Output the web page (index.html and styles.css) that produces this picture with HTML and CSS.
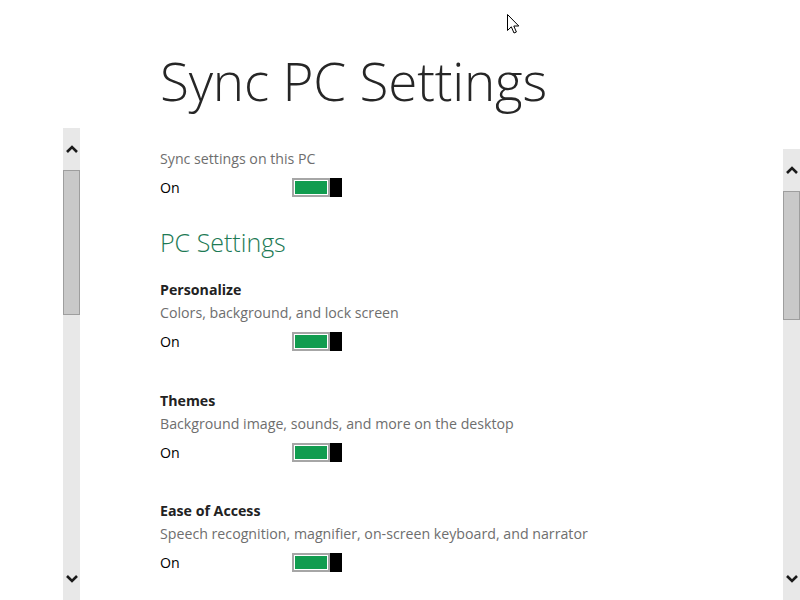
FILE: index.html
```html
<!DOCTYPE html>
<html lang="en">
<head>
<meta charset="utf-8">
<title>Sync PC Settings</title>
<link rel="stylesheet" href="styles.css">
</head>
<body>
<div class="screen">
  <div class="rail rail-left">
    <div class="scrollbar">
      <div class="sb-btn"><svg width="12" height="8" viewBox="0 0 12 8"><polyline points="1,7 6,2 11,7" fill="none" stroke="#1a1a1a" stroke-width="2.6"/></svg></div>
      <div class="sb-thumb thumb-left"></div>
      <div class="sb-track"></div>
      <div class="sb-btn"><svg width="12" height="8" viewBox="0 0 12 8"><polyline points="1,1 6,6 11,1" fill="none" stroke="#1a1a1a" stroke-width="2.6"/></svg></div>
    </div>
  </div>

  <main class="main">
    <h1 class="title">Sync PC Settings</h1>

    <div class="setting first">
      <div class="desc">Sync settings on this PC</div>
      <div class="toggle-row"><span class="state">On</span><span class="toggle"><span class="track"></span><span class="thumb"></span></span></div>
    </div>

    <h2 class="section">PC Settings</h2>

    <div class="setting">
      <div class="name">Personalize</div>
      <div class="desc">Colors, background, and lock screen</div>
      <div class="toggle-row"><span class="state">On</span><span class="toggle"><span class="track"></span><span class="thumb"></span></span></div>
    </div>

    <div class="setting">
      <div class="name">Themes</div>
      <div class="desc">Background image, sounds, and more on the desktop</div>
      <div class="toggle-row"><span class="state">On</span><span class="toggle"><span class="track"></span><span class="thumb"></span></span></div>
    </div>

    <div class="setting">
      <div class="name">Ease of Access</div>
      <div class="desc">Speech recognition, magnifier, on-screen keyboard, and narrator</div>
      <div class="toggle-row"><span class="state">On</span><span class="toggle"><span class="track"></span><span class="thumb"></span></span></div>
    </div>
  </main>

  <div class="rail rail-right">
    <div class="scrollbar">
      <div class="sb-btn"><svg width="12" height="8" viewBox="0 0 12 8"><polyline points="1,7 6,2 11,7" fill="none" stroke="#1a1a1a" stroke-width="2.6"/></svg></div>
      <div class="sb-thumb thumb-right"></div>
      <div class="sb-track"></div>
      <div class="sb-btn"><svg width="12" height="8" viewBox="0 0 12 8"><polyline points="1,1 6,6 11,1" fill="none" stroke="#1a1a1a" stroke-width="2.6"/></svg></div>
    </div>
  </div>

  <svg class="cursor" width="14" height="21" viewBox="0 0 14 21"><path d="M0.5 0.5 L0.5 16.5 L4.3 12.8 L7 19 L9.4 18 L6.8 12 L11.8 12 Z" fill="#fff" stroke="#000" stroke-width="1" stroke-linejoin="miter"/></svg>
</div>
</body>
</html>
```

FILE: styles.css
```css
html, body {
  margin: 0;
  padding: 0;
  background: #ffffff;
}

body {
  width: 800px;
  height: 600px;
  overflow: hidden;
  font-family: "Open Sans", "Noto Sans", "Liberation Sans", sans-serif;
}

.screen {
  position: relative;
  display: flex;
  height: 600px;
}

.rail {
  display: flex;
  flex-direction: column;
  box-sizing: border-box;
  height: 600px;
}

.rail-left {
  width: 80px;
  padding-left: 63px;
  padding-top: 128px;
}

.rail-right {
  width: 17px;
  padding-top: 149px;
}

.scrollbar {
  flex: 1;
  display: flex;
  flex-direction: column;
  width: 17px;
  background: #e8e8e8;
}

.sb-btn {
  height: 42px;
  display: flex;
  align-items: center;
  justify-content: center;
  flex: none;
}

.sb-thumb {
  box-sizing: border-box;
  background: #c9c9c9;
  border: 1px solid #9e9e9e;
  flex: none;
}

.thumb-left { height: 145px; }
.thumb-right { height: 129px; }

.sb-track { flex: 1; }

.main {
  flex: 1;
  padding-left: 80px;
  color: #222;
}

.title {
  margin: 43px 0 0 0;
  font-weight: 300;
  font-size: 53px;
  line-height: 76px;
  letter-spacing: -0.2px;
  color: #262626;
}

.setting.first {
  margin-top: 28px;
}

.desc {
  font-size: 14.2px;
  line-height: 23px;
  color: #6e6e6e;
}

.name {
  font-size: 14.2px;
  line-height: 23px;
  font-weight: 700;
  color: #222;
}

.toggle-row {
  display: flex;
  align-items: center;
  height: 35px;
}

.state {
  width: 132px;
  font-size: 14.2px;
  color: #000;
}

.toggle {
  display: flex;
  height: 19px;
}

.track {
  box-sizing: border-box;
  width: 38px;
  height: 19px;
  border: 2px solid #a6a6a6;
  background: #119c4f;
  box-shadow: inset 0 0 0 1px #ffffff;
}

.thumb {
  width: 12px;
  height: 19px;
  background: #000;
}

.section {
  margin: 21px 0 20px 0;
  font-weight: 300;
  font-size: 25px;
  line-height: 32px;
  color: #1d7a55;
}

.setting + .setting {
  margin-top: 29.5px;
}

.cursor {
  position: absolute;
  left: 507px;
  top: 14px;
}
```
